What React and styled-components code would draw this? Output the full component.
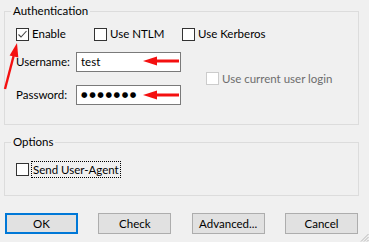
import React from "react"
import styled, { createGlobalStyle } from "styled-components"

const GlobalStyle = createGlobalStyle`
  html, body {
    margin: 0;
    padding: 0;
    background: #f0f0f0;
  }
  body {
    font-family: Lato, "Liberation Sans", sans-serif;
    font-size: 11.5px;
    color: #000;
  }
`

const StyledWindow = styled.div`
  position: relative;
  box-sizing: border-box;
  width: 369px;
  height: 242px;
  padding: 3px 10px 0 4px;
  background: #f0f0f0;
  overflow: hidden;
`
const StyledGroup = styled.fieldset`
  margin: ${({ $top }) => $top || 0}px 0 0;
  padding: 0;
  border: 1px solid #dcdcdc;
  min-width: 0;
`
const StyledLegend = styled.legend`
  margin-left: 6px;
  padding: 0 2px;
  line-height: 16px;
  height: 16px;
`
const StyledGroupBody = styled.div`
  padding: ${({ $pad }) => $pad};
`
const StyledCheckRow = styled.div`
  display: grid;
  grid-template-columns: 78px 88px auto;
  align-items: center;
`
const StyledCheck = styled.label`
  display: flex;
  align-items: center;
  gap: 3px;
  height: 16px;
  line-height: 16px;
  white-space: nowrap;
  color: ${({ $disabled }) => ($disabled ? "#6d6d6d" : "#000")};
`
const StyledBox = styled.span`
  box-sizing: border-box;
  display: inline-flex;
  flex: none;
  width: 13px;
  height: 13px;
  background: #fff;
  border: 1px solid ${({ $disabled }) => ($disabled ? "#cccccc" : "#333333")};
  svg {
    display: block;
  }
`
const StyledFocusText = styled.span`
  padding: 0 1px;
  outline: 1px dotted #000;
  outline-offset: 0;
  line-height: 15px;
`
const StyledForm = styled.div`
  display: grid;
  grid-template-columns: 60px 105px auto;
  grid-template-rows: 20px 20px;
  row-gap: 13px;
  align-items: center;
  margin-top: 10px;
`
const StyledFieldLabel = styled.span`
  line-height: 16px;
`
const StyledInput = styled.div`
  box-sizing: border-box;
  height: 20px;
  padding: 0 4px;
  background: #fff;
  border: 1px solid #7a7a7a;
  display: flex;
  align-items: center;
  line-height: 16px;
`
const StyledDots = styled.span`
  font-family: "DejaVu Sans", sans-serif;
  font-size: 7.5px;
  letter-spacing: 1.6px;
  line-height: 16px;
`
const StyledSide = styled.div`
  grid-column: 3;
  grid-row: 1 / span 2;
  align-self: center;
  margin-left: 25px;
`
const StyledButtonBar = styled.div`
  display: flex;
  justify-content: space-between;
  margin: 17px 1px 0;
`
const StyledButton = styled.button`
  box-sizing: border-box;
  width: 73px;
  height: 21px;
  padding: 0;
  font: inherit;
  color: #000;
  background: #e1e1e1;
  border: ${({ $default }) => ($default ? "2px solid #0078d7" : "1px solid #adadad")};
  border-radius: 0;
`
const StyledOverlay = styled.svg`
  position: absolute;
  left: 0;
  top: 0;
  pointer-events: none;
`
const StyledGrip = styled.svg`
  position: absolute;
  right: 0;
  bottom: 0;
`

const CheckBox = ({ checked, disabled, focus, children }) => (
  <StyledCheck $disabled={disabled}>
    <StyledBox $disabled={disabled}>
      {checked && (
        <svg width="11" height="11" viewBox="0 0 11 11">
          <polyline points="1.5,5.5 4,8 9.5,2" fill="none" stroke="#444" strokeWidth="1.1" />
        </svg>
      )}
    </StyledBox>
    {focus ? <StyledFocusText>{children}</StyledFocusText> : <span>{children}</span>}
  </StyledCheck>
)

const Arrows = () => (
  <StyledOverlay width="369" height="242" viewBox="0 0 369 242">
    <g fill="#f41010" stroke="#f41010">
      <line x1="5" y1="89" x2="13.6" y2="56" strokeWidth="2.4" />
      <polygon points="17,43 18.3,57.6 9.6,55.4" stroke="none" />
      <line x1="154" y1="61" x2="179" y2="61" strokeWidth="3" />
      <polygon points="143,61 157,56.5 157,65.5" stroke="none" />
      <line x1="154" y1="95" x2="179" y2="95" strokeWidth="3" />
      <polygon points="143,95 157,90.5 157,99.5" stroke="none" />
    </g>
  </StyledOverlay>
)

const App = () => (
  <StyledWindow>
    <GlobalStyle />
    <StyledGroup>
      <StyledLegend>Authentication</StyledLegend>
      <StyledGroupBody $pad="7px 0 19px 11px">
        <StyledCheckRow>
          <CheckBox checked>Enable</CheckBox>
          <CheckBox>Use NTLM</CheckBox>
          <CheckBox>Use Kerberos</CheckBox>
        </StyledCheckRow>
        <StyledForm>
          <StyledFieldLabel>Username:</StyledFieldLabel>
          <StyledInput>test</StyledInput>
          <StyledSide>
            <CheckBox disabled>Use current user login</CheckBox>
          </StyledSide>
          <StyledFieldLabel>Password:</StyledFieldLabel>
          <StyledInput>
            <StyledDots>●●●●●●●</StyledDots>
          </StyledInput>
        </StyledForm>
      </StyledGroupBody>
    </StyledGroup>
    <StyledGroup $top={9}>
      <StyledLegend>Options</StyledLegend>
      <StyledGroupBody $pad="11px 0 18px 11px">
        <CheckBox focus>Send User-Agent</CheckBox>
      </StyledGroupBody>
    </StyledGroup>
    <StyledButtonBar>
      <StyledButton $default>OK</StyledButton>
      <StyledButton>Check</StyledButton>
      <StyledButton>Advanced...</StyledButton>
      <StyledButton>Cancel</StyledButton>
    </StyledButtonBar>
    <Arrows />
    <StyledGrip width="10" height="10" viewBox="0 0 10 10">
      <g stroke="#b8b8b8" strokeWidth="1">
        <line x1="9.5" y1="2" x2="2" y2="9.5" />
        <line x1="9.5" y1="5" x2="5" y2="9.5" />
        <line x1="9.5" y1="8" x2="8" y2="9.5" />
      </g>
    </StyledGrip>
  </StyledWindow>
)

export default App
